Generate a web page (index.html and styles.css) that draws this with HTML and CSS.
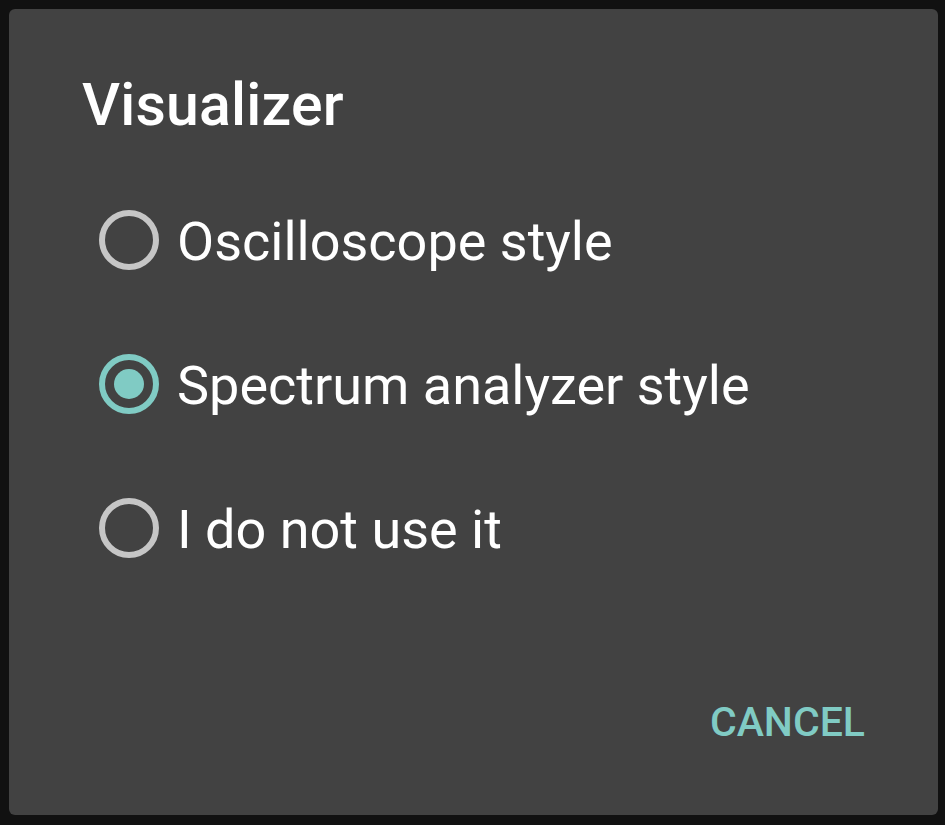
FILE: index.html
```html
<!DOCTYPE html>
<html>
<head>
<meta charset="utf-8">
<link rel="stylesheet" href="styles.css">
</head>
<body>
<div class="dialog">
  <div class="title">Visualizer</div>
  <div class="options">
    <div class="option">
      <svg class="radio" viewBox="0 0 60 60"><circle cx="30" cy="30" r="27" fill="none" stroke="#c6c6c6" stroke-width="6"/></svg>
      <span class="label">Oscilloscope style</span>
    </div>
    <div class="option">
      <svg class="radio" viewBox="0 0 60 60"><circle cx="30" cy="30" r="27" fill="none" stroke="#80cbc4" stroke-width="6"/><circle cx="30" cy="30" r="15" fill="#80cbc4"/></svg>
      <span class="label">Spectrum analyzer style</span>
    </div>
    <div class="option">
      <svg class="radio" viewBox="0 0 60 60"><circle cx="30" cy="30" r="27" fill="none" stroke="#c6c6c6" stroke-width="6"/></svg>
      <span class="label">I do not use it</span>
    </div>
  </div>
  <div class="actions">
    <span class="btn">CANCEL</span>
  </div>
</div>
</body>
</html>
```

FILE: styles.css
```css
html, body {
  margin: 0;
  padding: 0;
  background: #111111;
  width: 945px;
  height: 825px;
  overflow: hidden;
}
.dialog {
  margin: 9px;
  width: 929px;
  height: 806px;
  box-sizing: border-box;
  background: #424242;
  border-radius: 6px;
  padding: 61px 73px 0 73px;
  font-family: Roboto, "Noto Sans", sans-serif;
  color: #ffffff;
}
.title {
  font-size: 59px;
  font-weight: 500;
  line-height: 70px;
  letter-spacing: 0.2px;
}
.options {
  margin-top: 28px;
  padding-left: 17px;
}
.option {
  display: flex;
  align-items: center;
  height: 144px;
}
.radio {
  width: 60px;
  height: 60px;
  flex: none;
}
.label {
  margin-left: 18px;
  font-size: 54px;
  line-height: 140px;
  padding-top: 4px;
}
.actions {
  display: flex;
  justify-content: flex-end;
  margin-top: 98px;
}
.btn {
  font-size: 41px;
  font-weight: 500;
  line-height: 48px;
  color: #80cbc4;
}
```
